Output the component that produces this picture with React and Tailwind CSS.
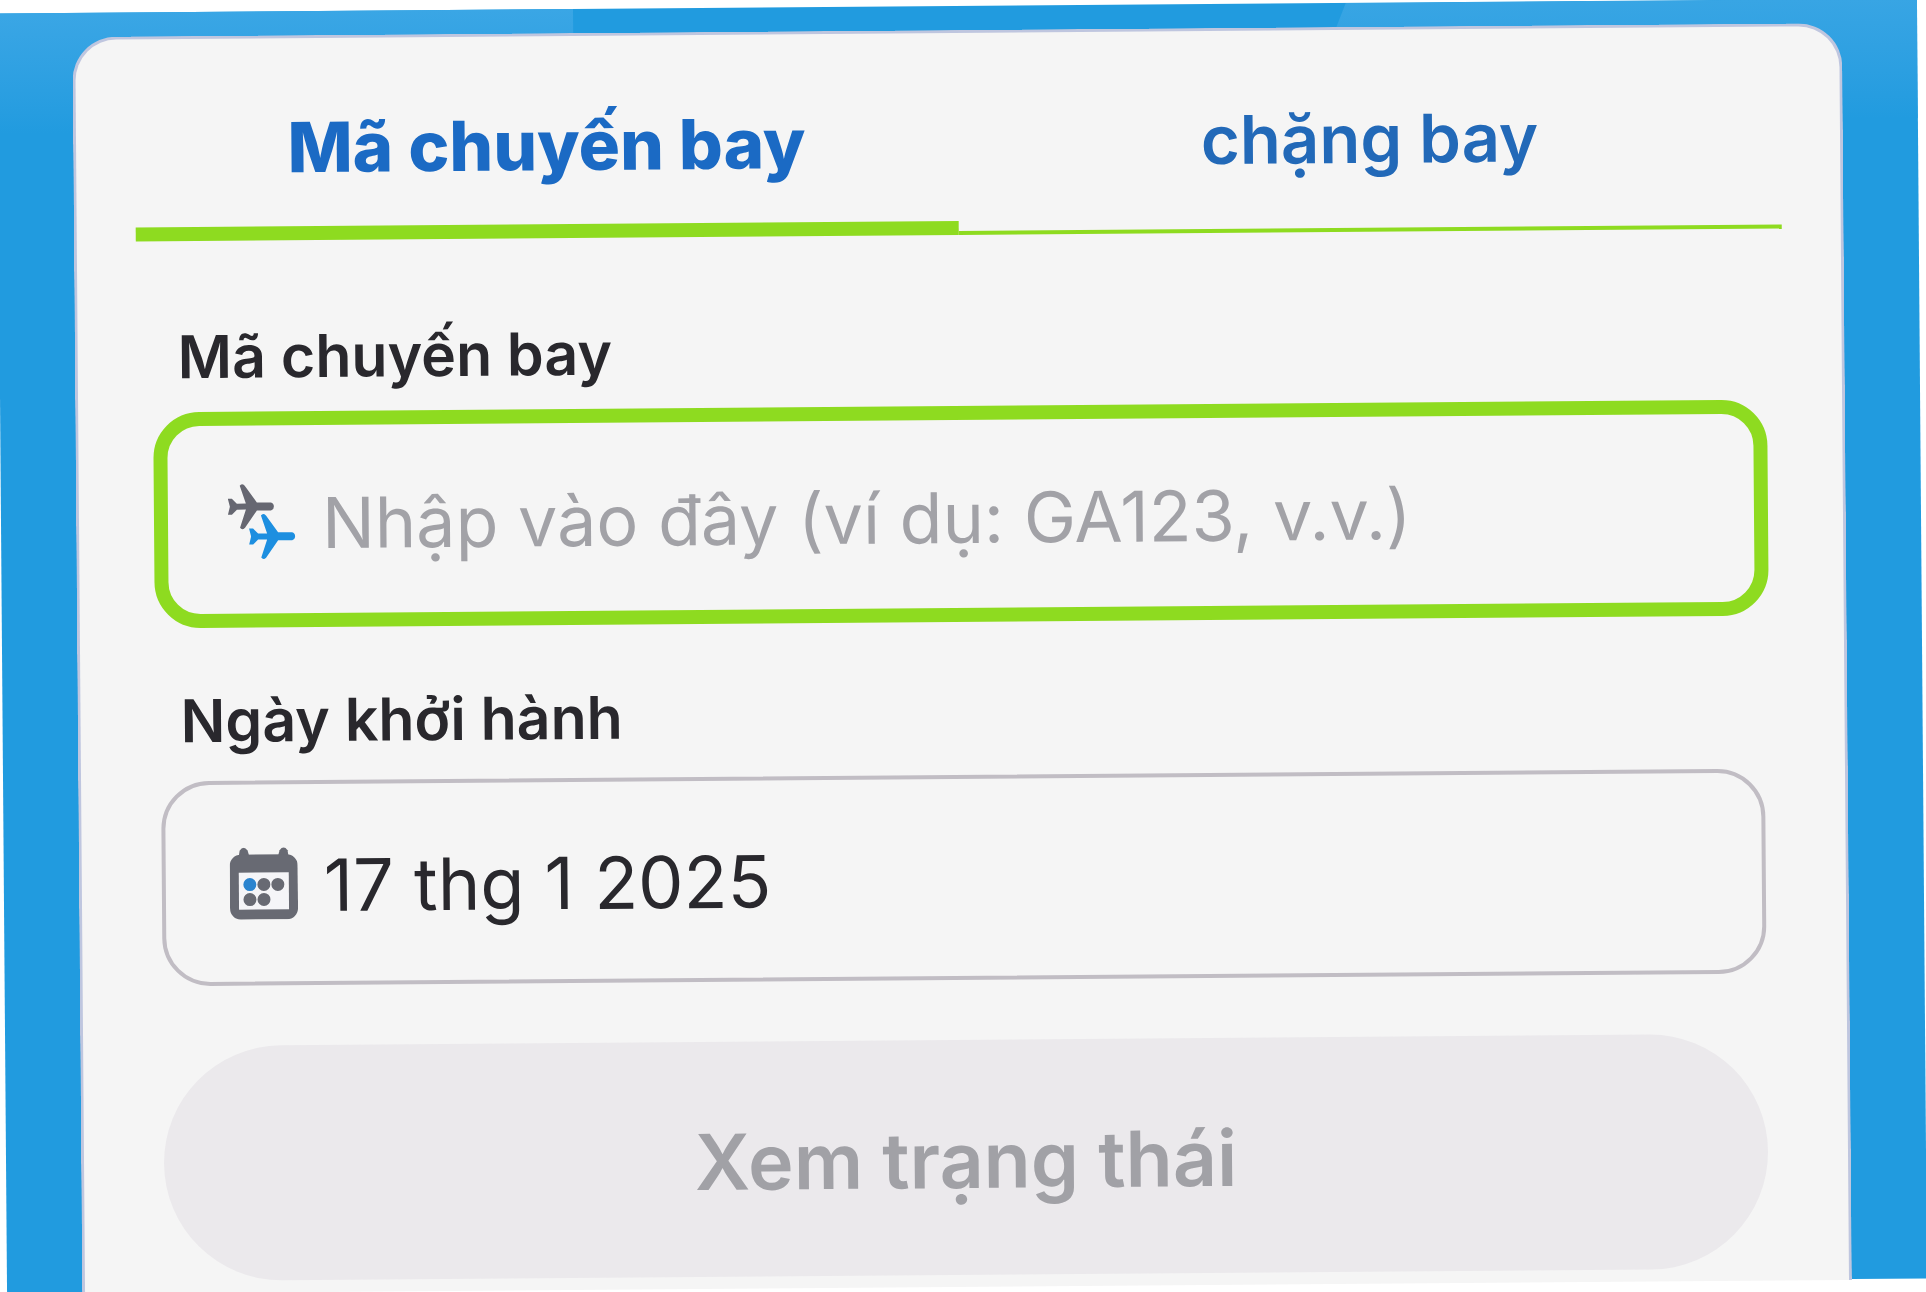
import { useState } from 'react'

const TABS = [
  { id: 'code',  label: 'Mã chuyến bay' },
  { id: 'route', label: 'chặng bay' },
]

// plane seen from above, nose to the right
const PLANE = 'M0 15 L4 15 L9 20 L18 20 L12 2 Q14 -1 17 2 L29 19 L43 19 Q46 20 46 23 Q46 26 43 27 L29 27 L17 44 Q14 47 12 44 L18 26 L9 26 L4 31 L0 31 L2 23 Z'

function PlanesIcon() {
  return (
    <svg viewBox="0 0 68 76" className="w-[68px] h-[76px] shrink-0" aria-hidden="true">
      <path d={PLANE} fill="#666771" />
      <path d={PLANE} fill="#1d8fe0" transform="translate(21 30)" />
    </svg>
  )
}

function CalendarIcon() {
  return (
    <svg viewBox="0 0 68 72" className="w-[68px] h-[72px] shrink-0" aria-hidden="true">
      <path d="M9 10 L10 3 Q14 -3 18 3 L20 10 Z" fill="#686a73" />
      <path d="M48 10 L50 3 Q54 -3 58 3 L59 10 Z" fill="#686a73" />
      <rect x="0" y="7" width="68" height="65" rx="11" fill="#686a73" />
      <rect x="9" y="25" width="50" height="37" fill="#f5f5f8" />
      <circle cx="20" cy="37" r="6.5" fill="#2b84cf" />
      <circle cx="34" cy="37" r="6.5" fill="#686a73" />
      <circle cx="48" cy="37" r="6.5" fill="#686a73" />
      <circle cx="20" cy="52" r="6.5" fill="#686a73" />
      <circle cx="34" cy="52" r="6.5" fill="#686a73" />
    </svg>
  )
}

export default function App() {
  const [tab, setTab]   = useState('code')
  const [code, setCode] = useState('')
  const [date, setDate] = useState('17 thg 1 2025')

  return (
    <div className="min-h-screen flex bg-white overflow-hidden pl-0.5 pr-1 py-1.5 font-['Inter',sans-serif]">
      <main className="relative flex-1 flex bg-[#219bdf] px-[75px] pt-6 -rotate-[0.45deg]">

        {/* Lighter shapes in the sky */}
        <div className="absolute left-0 top-0 w-[30%] h-[120px] bg-linear-to-b from-[#3aa6e5] to-[#219bdf]" />
        <div className="absolute right-0 top-0 w-[31%] h-[120px] bg-linear-to-b from-[#38a5e4] to-[#219bdf] [clip-path:polygon(24px_0,100%_0,100%_100%,0_100%,0_60px)]" />

        <section className="relative flex-1 -mb-px rounded-t-[44px] border-[3px] border-b-0 border-[#bfc6df] bg-[#f5f5f5] px-[59px] pb-2">

          {/* Tabs */}
          <div role="tablist" className="grid grid-cols-2">
            {TABS.map(t => (
              <button
                key={t.id}
                type="button"
                role="tab"
                aria-selected={tab === t.id}
                onClick={() => setTab(t.id)}
                className={`flex items-start justify-center h-[202px] pt-[69px] leading-[80px] border-[#8edb20] ${
                  tab === t.id
                    ? 'text-[69px] font-extrabold text-[#1b6ac4] border-b-[14px]'
                    : 'text-[67px] font-semibold text-[#2269b8] border-b-4'
                }`}
              >
                {t.label}
              </button>
            ))}
          </div>

          {/* Form */}
          <form className="flex flex-col px-[21px] pt-[82px]" onSubmit={e => e.preventDefault()}>
            <label htmlFor="code" className="pl-5 mb-[26px] text-[59px] leading-[68px] font-semibold text-[#29282d]">
              Mã chuyến bay
            </label>
            {/* thicker frame grows outwards, past the column */}
            <div className="flex items-center gap-[26px] h-[216px] -m-[5px] pt-1 px-[60px] rounded-[46px] border-[14px] border-[#8edb20]">
              <PlanesIcon />
              <input
                id="code"
                type="text"
                value={code}
                onChange={e => setCode(e.target.value)}
                placeholder="Nhập vào đây (ví dụ: GA123, v.v.)"
                className="flex-1 min-w-0 pt-1 bg-transparent outline-none text-[70px] leading-[90px] text-[#29282d] placeholder:text-[#a2a2a7]"
              />
            </div>

            <label htmlFor="date" className="pl-5 mt-16 mb-[26px] text-[59px] leading-[68px] font-semibold text-[#29282d]">
              Ngày khởi hành
            </label>
            <div className="flex items-center gap-[26px] h-[205px] px-16 rounded-[48px] border-4 border-[#c1bdc4]">
              <CalendarIcon />
              <input
                id="date"
                type="text"
                value={date}
                onChange={e => setDate(e.target.value)}
                className="flex-1 min-w-0 pt-1 bg-transparent outline-none text-[72px] leading-[90px] text-[#29282d]"
              />
            </div>

            <button
              type="submit"
              disabled={!code}
              className="mt-[60px] h-[235px] pt-1 rounded-full bg-[#ebe9ec] text-[77px] leading-[92px] font-semibold text-[#a1a1a6]"
            >
              Xem trạng thái
            </button>
          </form>
        </section>
      </main>
    </div>
  )
}
